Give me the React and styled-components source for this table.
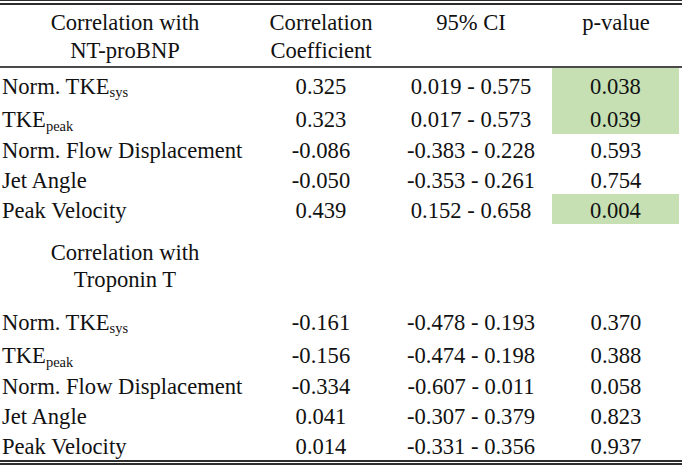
import React from "react";
import styled, { createGlobalStyle } from "styled-components";

const GlobalStyle = createGlobalStyle`
  body {
    margin: 0;
    background: #fff;
    font-family: "Liberation Serif", "Times New Roman", serif;
    color: #111;
  }
`;

const cols = "250px 142px 158px 132px";

const nt = [
  { name: "Norm. TKE", sub: "sys", r: "0.325", ci: "0.019 - 0.575", p: "0.038", hl: true },
  { name: "TKE", sub: "peak", r: "0.323", ci: "0.017 - 0.573", p: "0.039", hl: true },
  { name: "Norm. Flow Displacement", r: "-0.086", ci: "-0.383 - 0.228", p: "0.593" },
  { name: "Jet Angle", r: "-0.050", ci: "-0.353 - 0.261", p: "0.754" },
  { name: "Peak Velocity", r: "0.439", ci: "0.152 - 0.658", p: "0.004", hl: true },
];

const tnt = [
  { name: "Norm. TKE", sub: "sys", r: "-0.161", ci: "-0.478 - 0.193", p: "0.370" },
  { name: "TKE", sub: "peak", r: "-0.156", ci: "-0.474 - 0.198", p: "0.388" },
  { name: "Norm. Flow Displacement", r: "-0.334", ci: "-0.607 - 0.011", p: "0.058" },
  { name: "Jet Angle", r: "0.041", ci: "-0.307 - 0.379", p: "0.823" },
  { name: "Peak Velocity", r: "0.014", ci: "-0.331 - 0.356", p: "0.937" },
];

const App = () => {
  return (
    <>
      <GlobalStyle />
      <Table>
        <DoubleRule $thickTop={false} />
        <HeadRow>
          <HeadCell>
            Correlation with
            <br />
            NT-proBNP
          </HeadCell>
          <HeadCell>
            Correlation
            <br />
            Coefficient
          </HeadCell>
          <HeadCell>95% CI</HeadCell>
          <HeadCell>p-value</HeadCell>
        </HeadRow>
        {nt.map((row) => (
          <DataRow key={"a" + row.name} row={row} />
        ))}
        <SectionHead>
          <HeadCell>
            Correlation with
            <br />
            Troponin T
          </HeadCell>
        </SectionHead>
        {tnt.map((row) => (
          <DataRow key={"b" + row.name} row={row} />
        ))}
        <DoubleRule $thickTop={true} />
      </Table>
    </>
  );
};

const DataRow = ({ row }) => (
  <Row $tall={!!row.sub}>
    <NameCell>
      {row.name}
      {row.sub && <Sub $deep={row.sub === "peak"}>{row.sub}</Sub>}
    </NameCell>
    <Cell>{row.r}</Cell>
    <Cell>{row.ci}</Cell>
    <Cell $hl={row.hl}>{row.p}</Cell>
  </Row>
);

export default App;

const Table = styled.div`
  width: 682px;
  font-size: 22.6px;
`;

const DoubleRule = styled.div`
  height: ${(p) => (p.$thickTop ? "1px" : "2px")};
  border-top: ${(p) => (p.$thickTop ? "2px" : "1px")} solid #2e2e2e;
  border-bottom: 2px solid #2e2e2e;
`;

const HeadRow = styled.div`
  display: grid;
  grid-template-columns: ${cols};
  padding: 4px 0 2px;
  line-height: 27.6px;
  border-bottom: 2px solid #4a4a4a;
`;

const SectionHead = styled.div`
  display: grid;
  grid-template-columns: ${cols};
  padding: 15px 0 11px;
  line-height: 27px;
`;

const HeadCell = styled.div`
  text-align: center;
`;

const Row = styled.div`
  display: grid;
  grid-template-columns: ${cols};
  height: ${(p) => (p.$tall ? "33px" : "30px")};
  line-height: 25px;
  --pt: ${(p) => (p.$tall ? "6px" : "4px")};
`;

const Cell = styled.div`
  padding-top: var(--pt);
  text-align: center;
  background: ${(p) => (p.$hl ? "#c6e0b4" : "transparent")};
  margin: ${(p) => (p.$hl ? "0 3px 0 2px" : "0")};
`;

const NameCell = styled.div`
  padding-top: var(--pt);
  padding-left: 2px;
  white-space: nowrap;
`;

const Sub = styled.span`
  font-size: 14.5px;
  line-height: 0;
  vertical-align: ${(p) => (p.$deep ? "-4px" : "-3px")};
`;
